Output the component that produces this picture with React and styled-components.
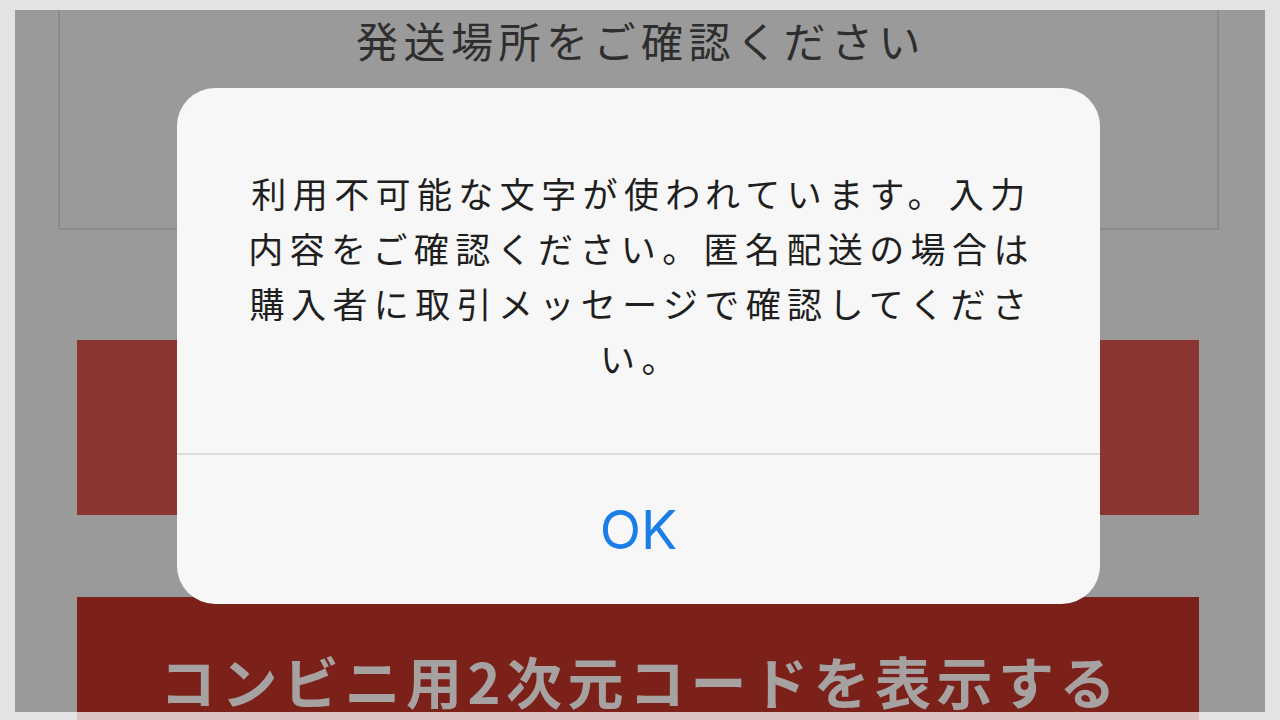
import styled, { createGlobalStyle } from "styled-components";

const GlobalStyle = createGlobalStyle`
  html, body {
    margin: 0;
    padding: 0;
    background: #e3e3e3;
    font-family: "Noto Sans CJK JP", "Noto Sans", sans-serif;
  }
`;

const Frame = styled.div`
  width: 1280px;
  height: 720px;
  overflow: hidden;
  display: flex;
  flex-direction: column;
  padding: 10px 15px 0;
  box-sizing: border-box;
  background: #e3e3e3;
`;

const Screen = styled.div`
  position: relative;
  height: 702px;
  flex-shrink: 0;
  overflow: hidden;
  background: #9a9a9a;
  display: flex;
  flex-direction: column;
`;

const AddressBox = styled.div`
  flex-shrink: 0;
  margin: -10px 0 0 43px;
  width: 1161px;
  height: 230px;
  box-sizing: border-box;
  border: 2px solid #8b8b8b;
  border-top: none;
  padding: 8px 0 0 5px;
  text-align: center;
  font-size: 42px;
  line-height: 64px;
  letter-spacing: 5.5px;
  color: #2e2e2e;
`;

const Button = styled.div`
  margin: ${({ $top }) => $top}px 0 0 62px;
  width: 1122px;
  height: ${({ $height }) => $height}px;
  flex-shrink: 0;
  background: ${({ $bg }) => $bg};
  display: flex;
  justify-content: center;
  padding: 53px 0 0 5px;
  box-sizing: border-box;
  font-size: 56px;
  font-weight: 700;
  line-height: 60px;
  letter-spacing: 5.5px;
  color: #a6a2a2;
  white-space: nowrap;
`;

const BottomStrip = styled.div`
  height: 8px;
  flex-shrink: 0;
  display: flex;
`;

const StripBlock = styled.div`
  margin-left: 62px;
  width: 1122px;
  background: #dcc3c1;
`;

const Dialog = styled.div`
  position: absolute;
  left: 162px;
  top: 78px;
  width: 923px;
  height: 516px;
  border-radius: 38px;
  background: #f7f7f7;
  display: flex;
  flex-direction: column;
  overflow: hidden;
`;

const Message = styled.p`
  margin: 0;
  padding: 77px 0 68px 6px;
  text-align: center;
  font-size: 35px;
  line-height: 55px;
  letter-spacing: 6.4px;
  color: #1f1f1f;
  white-space: nowrap;
`;

const Divider = styled.div`
  height: 2px;
  background: #dcdcdc;
`;

const OkButton = styled.button`
  flex: 1;
  border: none;
  background: transparent;
  display: flex;
  align-items: center;
  justify-content: center;
  padding: 0;
  font-family: "Inter", "Roboto", sans-serif;
  font-size: 54px;
  font-weight: 400;
  color: #1b7ee7;
  cursor: pointer;
`;

export default function App() {
  return (
    <>
      <GlobalStyle />
      <Frame>
        <Screen>
          <AddressBox>発送場所をご確認ください</AddressBox>
          <Button $top={110} $height={175} $bg="#8a352f" />
          <Button $top={82} $height={115} $bg="#7b2119">
            コンビニ用2次元コードを表示する
          </Button>
          <Dialog>
            <Message>
              利用不可能な文字が使われています。入力
              <br />
              内容をご確認ください。匿名配送の場合は
              <br />
              購入者に取引メッセージで確認してくださ
              <br />
              い。
            </Message>
            <Divider />
            <OkButton>OK</OkButton>
          </Dialog>
        </Screen>
        <BottomStrip>
          <StripBlock />
        </BottomStrip>
      </Frame>
    </>
  );
}
